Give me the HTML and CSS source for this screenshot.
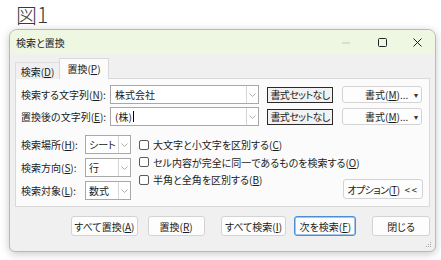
FILE: index.html
```html
<!DOCTYPE html>
<html lang="ja">
<head>
<meta charset="utf-8">
<link rel="stylesheet" href="styles.css">
</head>
<body>
<div class="page">
  <div class="fig">図1</div>
  <div class="window">
    <div class="titlebar">
      <span class="title">検索と置換</span>
      <div class="controls">
        <svg class="ctl min" width="8" height="2" viewBox="0 0 8 2"><path d="M0 1H8" stroke="#c4c4c4" stroke-width="1"/></svg>
        <svg class="ctl max" width="9" height="9" viewBox="0 0 9 9"><rect x="0.5" y="0.5" width="8" height="8" rx="1" fill="none" stroke="#222" stroke-width="1"/></svg>
        <svg class="ctl close" width="9" height="9" viewBox="0 0 9 9"><path d="M0.5 0.5L8.5 8.5M8.5 0.5L0.5 8.5" stroke="#222" stroke-width="1"/></svg>
      </div>
    </div>
    <div class="content">
      <div class="tabs">
        <div class="tab">検索(<u>D</u>)</div>
        <div class="tab active">置換(<u>P</u>)</div>
      </div>
      <div class="panel">
        <div class="row">
          <span class="label">検索する文字列(<u>N</u>):</span>
          <div class="combo">
            <span class="value">株式会社</span>
            <span class="drop"><svg width="7" height="4" viewBox="0 0 7 4"><path d="M0.5 0.5L3.5 3.5L6.5 0.5" fill="none" stroke="#999" stroke-width="0.8"/></svg></span>
          </div>
          <div class="noformat"><span class="tight">書式セットなし</span></div>
          <div class="format"><span>書式(<u>M</u>)...</span><span class="tri">▾</span></div>
        </div>
        <div class="row">
          <span class="label">置換後の文字列(<u>E</u>):</span>
          <div class="combo">
            <span class="value">(株)<span class="caret"></span></span>
            <span class="drop"><svg width="7" height="4" viewBox="0 0 7 4"><path d="M0.5 0.5L3.5 3.5L6.5 0.5" fill="none" stroke="#999" stroke-width="0.8"/></svg></span>
          </div>
          <div class="noformat"><span class="tight">書式セットなし</span></div>
          <div class="format"><span>書式(<u>M</u>)...</span><span class="tri">▾</span></div>
        </div>
        <div class="options">
          <div class="selects">
            <div class="srow">
              <span class="slabel">検索場所(<u>H</u>):</span>
              <div class="select"><span class="value">シート</span><span class="drop"><svg width="7" height="4" viewBox="0 0 7 4"><path d="M0.5 0.5L3.5 3.5L6.5 0.5" fill="none" stroke="#999" stroke-width="0.8"/></svg></span></div>
            </div>
            <div class="srow">
              <span class="slabel">検索方向(<u>S</u>):</span>
              <div class="select"><span class="value">行</span><span class="drop"><svg width="7" height="4" viewBox="0 0 7 4"><path d="M0.5 0.5L3.5 3.5L6.5 0.5" fill="none" stroke="#999" stroke-width="0.8"/></svg></span></div>
            </div>
            <div class="srow">
              <span class="slabel">検索対象(<u>L</u>):</span>
              <div class="select"><span class="value">数式</span><span class="drop"><svg width="7" height="4" viewBox="0 0 7 4"><path d="M0.5 0.5L3.5 3.5L6.5 0.5" fill="none" stroke="#999" stroke-width="0.8"/></svg></span></div>
            </div>
          </div>
          <div class="checks">
            <div class="check"><span class="box"></span><span>大文字と小文字を区別する(<u>C</u>)</span></div>
            <div class="check"><span class="box"></span><span>セル内容が完全に同一であるものを検索する(<u>O</u>)</span></div>
            <div class="check"><span class="box"></span><span>半角と全角を区別する(<u>B</u>)</span></div>
          </div>
          <div class="optbtn"><span class="tight">オプション(<u>T</u>)</span><span class="lt">&lt;&lt;</span></div>
        </div>
      </div>
      <div class="actions">
        <div class="btn b-all-rep">すべて置換(<u>A</u>)</div>
        <div class="btn b-rep">置換(<u>R</u>)</div>
        <div class="btn b-all-find">すべて検索(<u>I</u>)</div>
        <div class="btn b-next">次を検索(<u>F</u>)</div>
        <div class="btn b-close">閉じる</div>
      </div>
    </div>
    <svg class="grip" width="6" height="6" viewBox="0 0 6 6"><g fill="#a8a8a8"><rect x="4" y="0" width="1" height="1"/><rect x="2" y="2" width="1" height="1"/><rect x="4" y="2" width="1" height="1"/><rect x="0" y="4" width="1" height="1"/><rect x="2" y="4" width="1" height="1"/><rect x="4" y="4" width="1" height="1"/></g></svg>
  </div>
</div>
</body>
</html>
```

FILE: styles.css
```css
* { box-sizing: border-box; }
html, body { margin: 0; padding: 0; background: #ffffff; }
body {
  width: 441px;
  height: 260px;
  overflow: hidden;
  font-family: "Noto Sans CJK JP", "Noto Sans", sans-serif;
  font-size: 10px;
  color: #1b1b1b;
  font-feature-settings: "palt";
}
u { text-decoration: underline; text-underline-offset: 1px; text-decoration-thickness: 1px; }

.page { padding: 0 0 0 9px; }

.fig {
  height: 29px;
  padding-left: 7px;
  font-size: 21px;
  line-height: 29px;
  font-weight: 300;
  color: #3a3a3a;
  font-feature-settings: normal;
}

.window {
  position: relative;
  width: 427px;
  height: 223px;
  background: #f0f0f0;
  border: 1px solid #b9b9b9;
  border-radius: 8px 8px 6px 6px;
  box-shadow: 0 2px 9px rgba(0,0,0,0.22);
  overflow: hidden;
  display: flex;
  flex-direction: column;
}

.titlebar {
  height: 24px;
  background: #eef7e2;
  display: flex;
  align-items: center;
  padding-left: 6px;
}
.title { font-size: 10px; color: #1b1b1b; }
.controls {
  margin-left: auto;
  display: flex;
  align-items: center;
  height: 100%;
}
.ctl { display: block; }
.min { margin-right: 28px; margin-top: 1px; }
.max { margin-right: 26px; }
.close { margin-right: 13px; }

.content {
  flex: 1;
  display: flex;
  flex-direction: column;
  padding: 5px 5px 0 5px;
}

.tabs {
  display: flex;
  align-items: flex-end;
  height: 20px;
  margin-bottom: -1px;
  position: relative;
  z-index: 1;
}
.tab {
  height: 17px;
  width: 45px;
  display: flex;
  align-items: center;
  justify-content: center;
  border: 1px solid #dedede;
  border-bottom: none;
  background: #f0f0f0;
  font-size: 10px;
}
.tab.active {
  height: 21px;
  width: 50px;
  background: #fbfbfb;
  border-color: #d9d9d9;
  margin-left: -1px;
  padding-bottom: 2px;
}

.panel {
  height: 129px;
  background: #fbfbfb;
  border: 1px solid #d9d9d9;
  padding: 6px 6px 0 5px;
  display: flex;
  flex-direction: column;
  gap: 3px;
}

.row {
  display: flex;
  align-items: center;
  height: 19px;
}
.label { width: 89px; white-space: nowrap; }
.combo {
  width: 149px;
  height: 19px;
  background: #fff;
  border: 1px solid #a8a8a8;
  display: flex;
  align-items: center;
}
.combo .value { flex: 1; padding-left: 4px; display: flex; align-items: center; }
.caret { display: inline-block; width: 1px; height: 11px; background: #000; margin-left: 1px; }
.drop {
  width: 12px;
  height: 100%;
  border-left: 1px solid #d6d6d6;
  display: flex;
  align-items: center;
  justify-content: center;
}
.noformat {
  margin-left: 8px;
  width: 66px;
  height: 16px;
  border: 1px solid #2a2a2a;
  background: #f2f2f2;
  display: flex;
  align-items: center;
  justify-content: center;
  font-size: 10px;
}
.tight { letter-spacing: -0.6px; white-space: nowrap; }
.format {
  margin-left: 9px;
  width: 80px;
  height: 17px;
  border: 1px solid #d3d3d3;
  border-radius: 3px;
  background: #fdfdfd;
  display: flex;
  align-items: center;
  padding-left: 22px;
}
.format .tri { margin-left: auto; margin-right: 3px; font-size: 8px; color: #333; }

.options {
  display: flex;
  margin-top: 6px;
}
.selects { display: flex; flex-direction: column; gap: 4px; flex-shrink: 0; }
.srow { display: flex; align-items: center; height: 19px; }
.slabel { width: 64px; white-space: nowrap; }
.select {
  width: 46px;
  height: 19px;
  background: #fff;
  border: 1px solid #a8a8a8;
  display: flex;
  align-items: center;
}
.select .value { flex: 1; padding-left: 3px; }
.select .drop { width: 12px; }

.checks {
  flex: 1 1 0;
  min-width: 0;
  margin-left: 8px;
  display: flex;
  flex-direction: column;
  padding-top: 1px;
}
.check {
  height: 17.5px;
  display: flex;
  align-items: center;
  white-space: nowrap;
}
.box {
  width: 10px;
  height: 10px;
  flex-shrink: 0;
  border: 1px solid #5a5a5a;
  border-radius: 2px;
  background: #fff;
  margin-right: 4px;
}

.optbtn {
  align-self: flex-end;
  margin-bottom: 1px;
  width: 80px;
  flex-shrink: 0;
  height: 20px;
  border: 1px solid #d3d3d3;
  border-radius: 3px;
  background: #fdfdfd;
  display: flex;
  align-items: center;
  justify-content: center;
  white-space: nowrap;
}
.lt { margin-left: 5px; letter-spacing: 1.5px; }

.actions {
  display: flex;
  align-items: center;
  margin-top: 9px;
  height: 20px;
}
.btn {
  height: 20px;
  border: 1px solid #d3d3d3;
  border-radius: 3px;
  background: #fdfdfd;
  display: flex;
  align-items: center;
  justify-content: center;
  white-space: nowrap;
}
.b-all-rep { margin-left: 56px; width: 67px; }
.b-rep { margin-left: 10px; width: 57px; }
.b-all-find { margin-left: 16px; width: 66px; }
.b-next { margin-left: 8px; width: 62px; border: 1px solid #4a8fd6; box-shadow: inset 0 0 0 0.5px #4a8fd6; }
.b-close { margin-left: 16px; width: 58px; }

.grip { position: absolute; right: 3px; bottom: 3px; }
```
